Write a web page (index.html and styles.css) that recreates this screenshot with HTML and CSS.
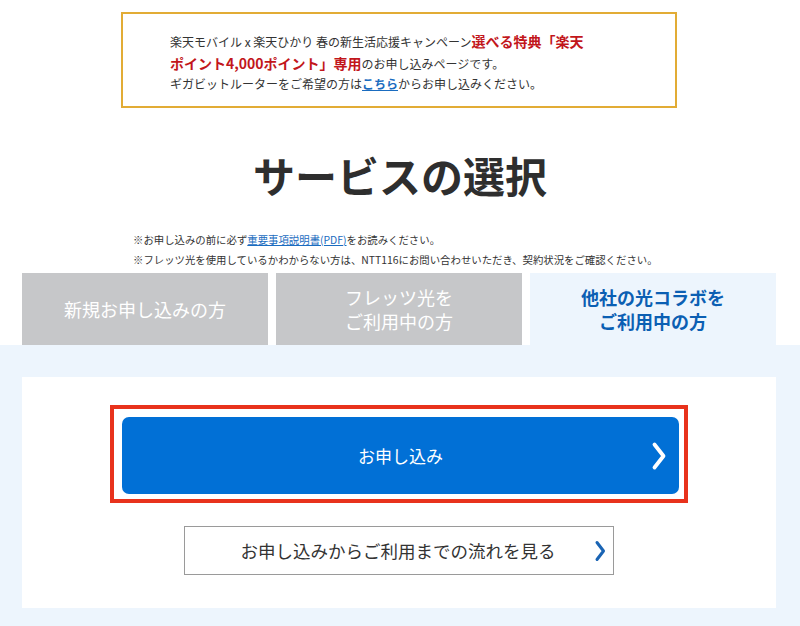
FILE: index.html
```html
<!DOCTYPE html>
<html lang="ja">
<head>
<meta charset="utf-8">
<title>サービスの選択</title>
<link rel="stylesheet" href="styles.css">
</head>
<body>
<div class="notice">
  <p>楽天モバイル x 楽天ひかり 春の新生活応援キャンペーン<strong class="red">選べる特典「楽天<br>ポイント4,000ポイント」専用</strong>のお申し込みページです。<br>ギガビットルーターをご希望の方は<a class="here" href="#">こちら</a>からお申し込みください。</p>
</div>

<h1 class="title">サービスの選択</h1>

<div class="notes">
  <p>※お申し込みの前に必ず<a href="#">重要事項説明書(PDF)</a>をお読みください。</p>
  <p>※フレッツ光を使用しているかわからない方は、NTT116にお問い合わせいただき、契約状況をご確認ください。</p>
</div>

<div class="tabs">
  <div class="tab">新規お申し込みの方</div>
  <div class="tab">フレッツ光を<br>ご利用中の方</div>
  <div class="tab active">他社の光コラボを<br>ご利用中の方</div>
</div>

<div class="panel">
  <div class="card">
    <div class="highlight">
      <a class="btn-primary" href="#">
        <span>お申し込み</span>
        <svg class="chev-white" viewBox="0 0 16 30" width="16" height="30"><path d="M3.5 3.5 L12.5 15 L3.5 26.5" fill="none" stroke="#fff" stroke-width="3.8" stroke-linecap="round" stroke-linejoin="round"/></svg>
      </a>
    </div>
    <a class="btn-outline" href="#">
      <span>お申し込みからご利用までの流れを見る</span>
      <svg class="chev-blue" viewBox="0 0 12 22" width="12" height="22"><path d="M3 2.5 L9.5 11 L3 19.5" fill="none" stroke="#1a64b4" stroke-width="3" stroke-linecap="round" stroke-linejoin="round"/></svg>
    </a>
  </div>
</div>
</body>
</html>
```

FILE: styles.css
```css
* { box-sizing: border-box; }
html, body { margin: 0; padding: 0; background: #fff; }
body {
  width: 800px;
  font-family: "Noto Sans CJK JP", "Noto Sans", "Liberation Sans", sans-serif;
  color: #333;
}
p { margin: 0; }

.notice {
  width: 556px;
  height: 96px;
  margin: 12px 0 0 121px;
  border: 2px solid #e2ac35;
  padding: 17px 10px 0 47px;
}
.notice p {
  font-size: 12px;
  line-height: 20.5px;
  color: #333;
  white-space: nowrap;
}
.notice .red {
  color: #c2161b;
  font-size: 14px;
  font-weight: bold;
}
.notice .here {
  color: #1a6cc0;
  font-weight: bold;
  text-decoration: underline;
}

.title {
  margin: 42px 0 0;
  text-align: center;
  font-size: 42px;
  line-height: 50px;
  font-weight: bold;
  color: #2e2e2e;
}

.notes {
  margin: 30px 0 0 133px;
  font-size: 10.4px;
  line-height: 20px;
  color: #333;
  white-space: nowrap;
}
.notes a { color: #1a6cc0; text-decoration: underline; }

.tabs {
  display: grid;
  grid-template-columns: repeat(3, 1fr);
  gap: 8px;
  padding: 0 24px 0 22px;
  margin-top: 3px;
}
.tab {
  height: 72px;
  background: #c6c7c9;
  color: #fff;
  font-size: 18px;
  line-height: 24px;
  display: flex;
  align-items: center;
  justify-content: center;
  text-align: center;
}
.tab.active {
  background: #edf5fd;
  color: #0b5fb3;
  font-weight: bold;
}

.panel {
  background: #edf5fd;
  padding: 32px 24px 18px 22px;
}
.card {
  background: #fff;
  height: 231px;
  padding-top: 28px;
  display: flex;
  flex-direction: column;
  align-items: center;
}
.highlight {
  width: 578px;
  border: 4px solid #e8321c;
  padding: 8px 5px 5px 8px;
}
.btn-primary {
  display: flex;
  align-items: center;
  justify-content: center;
  position: relative;
  height: 77px;
  background: #0170d6;
  border-radius: 7px;
  color: #fff;
  text-decoration: none;
  font-size: 17px;
}
.chev-white {
  position: absolute;
  right: 12px;
  top: 24px;
}
.btn-outline {
  margin-top: 23px;
  width: 430px;
  height: 49px;
  border: 1px solid #9a9a9a;
  display: flex;
  align-items: center;
  justify-content: center;
  position: relative;
  color: #333;
  text-decoration: none;
  font-size: 17.5px;
  padding-right: 2px;
}
.chev-blue {
  position: absolute;
  right: 7px;
  top: 13px;
}
```
